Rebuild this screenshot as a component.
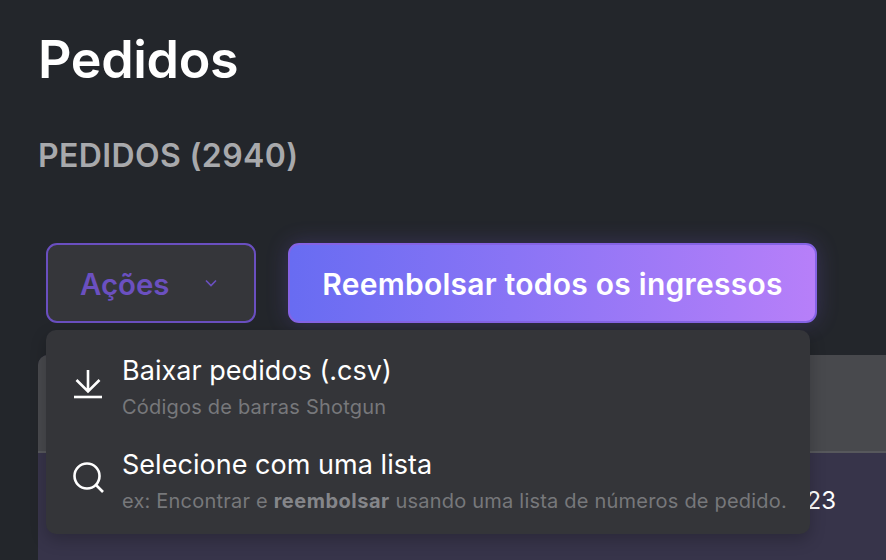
<style>
:global(body){margin:0;background:#23262b;overflow:hidden}
.page{height:560px;overflow:hidden;box-sizing:border-box;padding:28px 0 0 38px;font-family:Inter,"Liberation Sans",sans-serif;color:#fff}
h1{margin:0;font-size:52px;line-height:64px;font-weight:600;letter-spacing:-.35px}
h2{margin:44px 0 0;font-size:32px;line-height:40px;font-weight:600;color:#a8a9ac;letter-spacing:.37px}
.actions{display:flex;gap:32px;margin:67px 0 0 8px;height:80px;position:relative}
button{box-sizing:border-box;height:80px;border-radius:11px;font:600 30px Inter,sans-serif;border:2px solid}
.menu-btn{width:210px;background:#35363a;border-color:#6a4fc0;color:#6b50c0;display:flex;align-items:center;padding:0 0 0 32px;gap:35px;font-size:29.4px}
.menu-btn span,.refund span{position:relative;top:1px}
.refund{width:529px;background:linear-gradient(90deg,#686cf2,#b77ff9);border-color:#8563e4;color:#fff;box-shadow:0 0 22px rgba(124,92,230,.24);padding:0;letter-spacing:.25px}
.dropdown{position:absolute;left:0;top:87px;width:764px;height:204px;background:#343539;border-radius:10px;box-shadow:0 6px 16px rgba(0,0,0,.22);z-index:2;box-sizing:border-box;padding:6px 0}
.item{display:flex;height:94px;align-items:center;padding-left:26px;gap:18px}
.item svg{flex:none}
.text{padding-top:7px}
.t{font-size:27px;line-height:38px;font-weight:400;letter-spacing:.03px}
.s{font-size:20px;line-height:30px;color:#77787b;margin-top:2px;white-space:nowrap;letter-spacing:.21px}
.s b{font-weight:700;color:#85868a;letter-spacing:.5px}
.table{margin-top:32px;height:205px;border-radius:10px 0 0 0;overflow:hidden;background:#37344a}
.head{height:96px;background:#48494d;border-bottom:2px solid #57585c}
.row{display:flex;justify-content:flex-end;padding:30px 50px 0 0;font-size:24px;line-height:36px}
</style>

<div class="page">
  <h1>Pedidos</h1>
  <h2>PEDIDOS (2940)</h2>
  <div class="actions">
    <button class="menu-btn">
      <span>Ações</span>
      <svg width="14" height="10" viewBox="0 0 14 10" fill="none" stroke="#6b50c0" stroke-width="1.6"><path d="M2 2.5l5 5 5-5"/></svg>
    </button>
    <button class="refund"><span>Reembolsar todos os ingressos</span></button>
    <div class="dropdown">
      <div class="item">
        <svg width="32" height="32" viewBox="0 0 32 32" fill="none" stroke="#fff" stroke-width="2.6"><path d="M16 3v21.5M4.5 13L16 24.5 27.5 13"/><path d="M2 30h28"/></svg>
        <div class="text"><div class="t">Baixar pedidos (.csv)</div><div class="s">Códigos de barras Shotgun</div></div>
      </div>
      <div class="item">
        <svg width="32" height="32" viewBox="0 0 32 32" fill="none" stroke="#fff" stroke-width="2.6"><circle cx="15" cy="15" r="12.5"/><path d="M24 24l7 7"/></svg>
        <div class="text"><div class="t">Selecione com uma lista</div><div class="s">ex: Encontrar e <b>reembolsar</b> usando uma lista de números de pedido.</div></div>
      </div>
    </div>
  </div>
  <div class="table">
    <div class="head"></div>
    <div class="row">23</div>
  </div>
</div>
